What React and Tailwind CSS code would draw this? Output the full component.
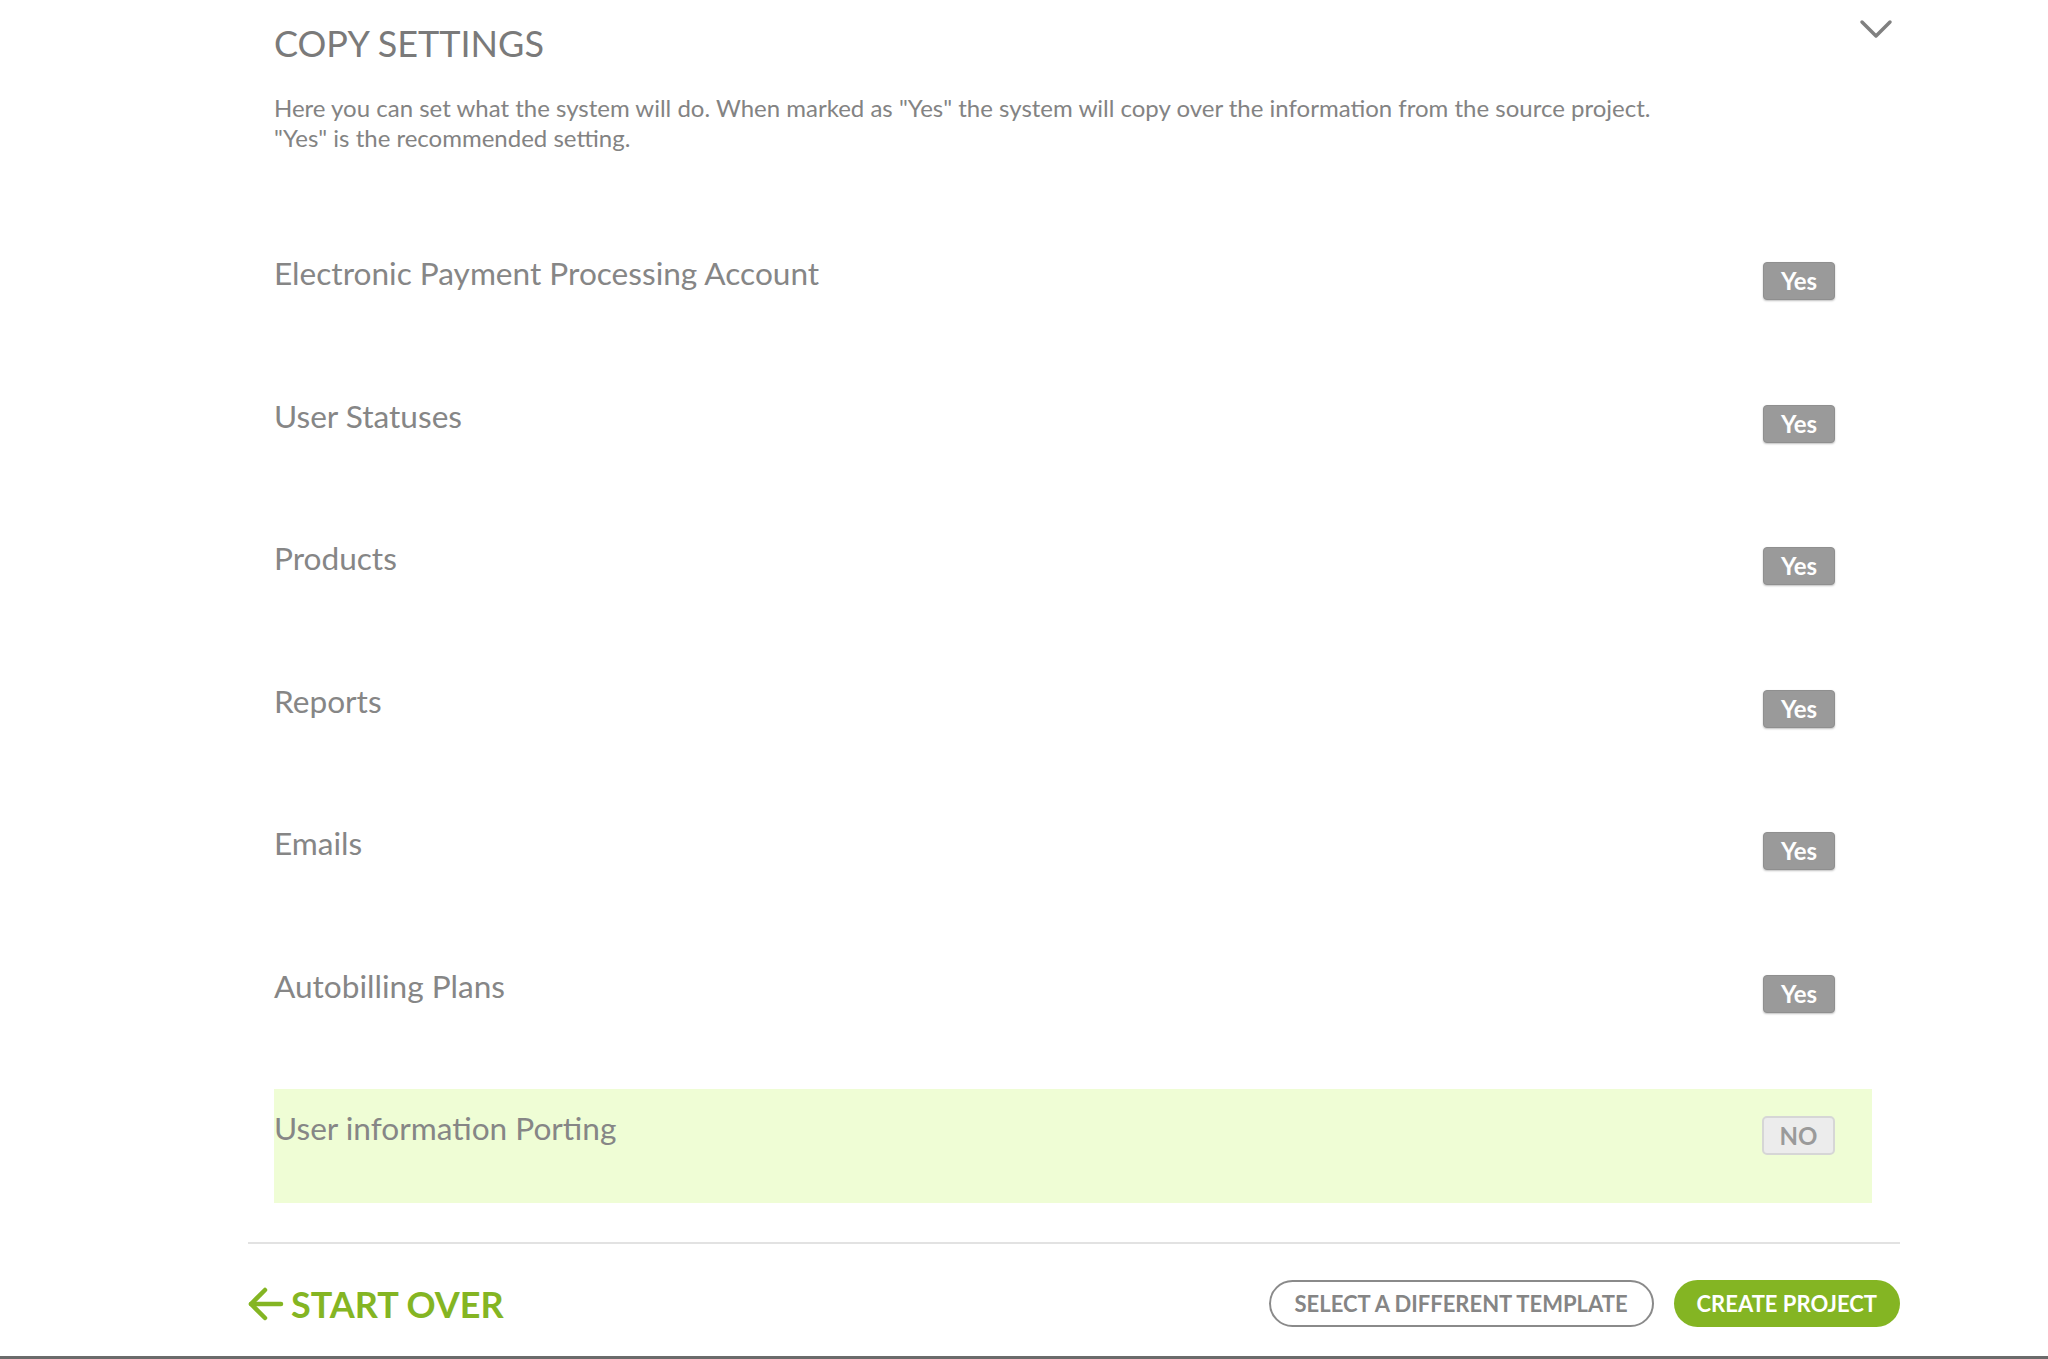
const items = [
  { label: "Electronic Payment Processing Account", on: true },
  { label: "User Statuses", on: true },
  { label: "Products", on: true },
  { label: "Reports", on: true },
  { label: "Emails", on: true },
  { label: "Autobilling Plans", on: true },
]

function Toggle({ on }) {
  if (on) {
    return (
      <button className="mt-[9px] flex h-[38px] w-[72px] items-center justify-center rounded-[4px] border border-[#8f8f8f] bg-[#9a9a9a] text-[24px] font-bold text-white shadow-[0_1px_2px_rgba(0,0,0,0.25)]">
        Yes
      </button>
    )
  }
  return (
    <button className="mt-[8px] flex h-[39px] w-[73px] items-center justify-center rounded-[5px] border-2 border-[#d6d6d6] bg-[#ececec] text-[24px] font-bold text-[#9a9a9a]">
      NO
    </button>
  )
}

function Row({ label, on, highlight }) {
  return (
    <div
      className={
        highlight
          ? "flex h-[114px] items-start justify-between bg-[#effdd5] pt-[19px] pr-[37px]"
          : "flex h-[142.5px] items-start justify-between pt-[19px] pr-[37px]"
      }
    >
      <span className="text-[31.6px] leading-[40px] text-[#868686]">{label}</span>
      <Toggle on={on} />
    </div>
  )
}

export default function App() {
  return (
    <div
      className="relative flex h-[1359px] w-full flex-col bg-white"
      style={{ fontFamily: "Lato, 'Open Sans', sans-serif" }}
    >
      <div className="pl-[274px] pr-[176px]">
        <div className="flex items-start justify-between pt-[19px]">
          <h1 className="mt-[2px] text-[36px] leading-[44px] text-[#7a7a7a]">COPY SETTINGS</h1>
          <svg
            className="-mr-[21px] text-[#808080]"
            width="34"
            height="22"
            viewBox="0 0 34 22"
            fill="none"
            stroke="currentColor"
            strokeWidth="3.5"
            strokeLinecap="round"
            strokeLinejoin="round"
          >
            <path d="M3 3l14 14L31 3" />
          </svg>
        </div>
        <p className="mt-[28px] text-[24px] leading-[30px] text-[#838383]">
          Here you can set what the system will do. When marked as "Yes" the system will copy over the information from the source project.
          <br />
          "Yes" is the recommended setting.
        </p>

        <div className="mt-[81px] flex flex-col">
          {items.map((it) => (
            <Row key={it.label} label={it.label} on={it.on} />
          ))}
          <Row label="User information Porting" on={false} highlight />
        </div>
      </div>

      <div className="ml-[248px] mr-[148px] mt-[39px] h-[2px] bg-[#e2e2e2]" />

      <div className="ml-[248px] mr-[148px] mt-[36px] flex items-center justify-between">
        <button className="flex items-center gap-[7px] text-[#84b523]">
          <svg width="36" height="34" viewBox="0 0 36 34" fill="none" stroke="currentColor" strokeWidth="4.5" strokeLinecap="round" strokeLinejoin="round">
            <path d="M33 17H3" />
            <path d="M17 3L3 17l14 14" />
          </svg>
          <span className="text-[36px] font-bold leading-[44px]">START OVER</span>
        </button>
        <div className="flex items-center gap-[20px]">
          <button className="h-[47px] rounded-full border-2 border-[#8a8a8a] px-[24px] text-[22px] font-bold text-[#858585]">
            SELECT A DIFFERENT TEMPLATE
          </button>
          <button className="h-[47px] rounded-full bg-[#84b523] px-[23px] text-[22px] font-bold text-white">
            CREATE PROJECT
          </button>
        </div>
      </div>

      <div className="absolute bottom-0 left-0 h-[3px] w-full bg-[#6b6b6b]" />
    </div>
  )
}
